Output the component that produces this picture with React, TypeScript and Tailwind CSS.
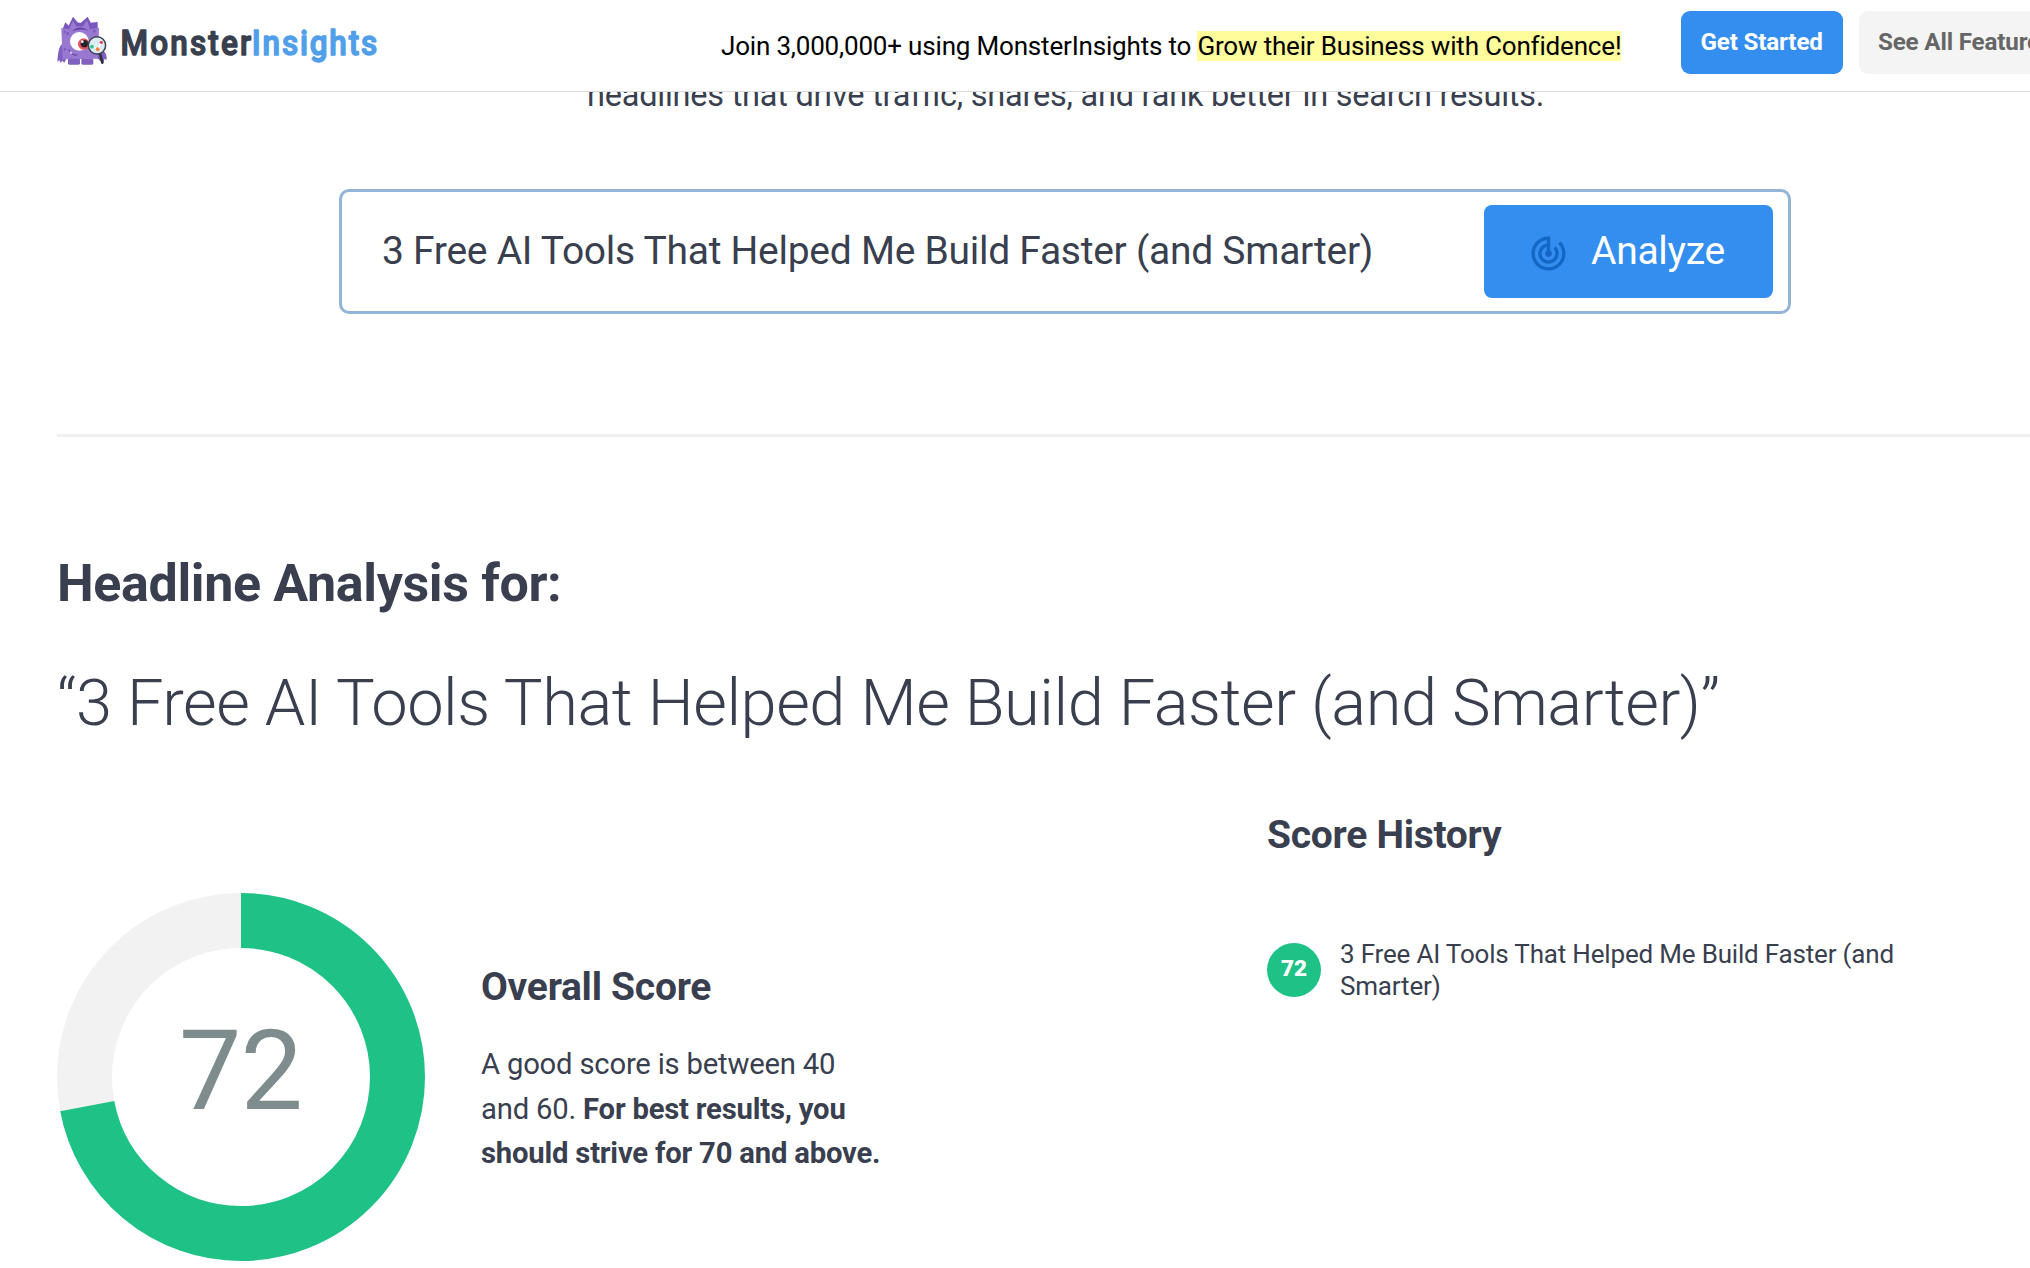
import { MdTrackChanges } from 'react-icons/md';

const headline = '3 Free AI Tools That Helped Me Build Faster (and Smarter)';
const score = 72;

const history = [{ score: 72, title: headline }];

const MonsterLogo = () => (
    <svg width="51" height="49" viewBox="21 18 153 147" className="shrink-0">
        {/* Arms */}
        <path d="M40 98 C26 108 24 128 22 156 L28 150 L31 159 L37 152 L43 158 L48 148 L48 100 Z" fill="#7f5fc0" />
        <path d="M140 110 C160 118 172 128 170 150 L164 146 L160 158 L150 152 L138 140 Z" fill="#7f5fc0" />
        {/* Spikes */}
        <path d="M36 62 L46 37 L56 47 L69 20 L84 38 L93 38 L113 20 L122 38 L143 36 L143 62 Z" fill="#7a55bd" />
        <path d="M56 60 L69 32 L84 56 Z M94 56 L111 30 L120 58 Z" fill="#9a7bd2" />
        {/* Body */}
        <path d="M34 54 L60 58 C72 46 104 46 116 58 L147 53 L144 146 L38 148 Z" fill="#9878d0" />
        <path d="M66 64 Q88 42 116 62 Q90 54 66 64 Z" fill="#6541a5" />
        <circle cx="44" cy="66" r="4" fill="#7f5fc0" />
        <circle cx="53" cy="71" r="5" fill="#7f5fc0" />
        <circle cx="133" cy="63" r="5" fill="#7f5fc0" />
        <circle cx="45" cy="118" r="4" fill="#7f5fc0" />
        {/* Feet */}
        <rect x="54" y="146" width="36" height="18" rx="4" fill="#7f5fc0" />
        <rect x="94" y="146" width="36" height="18" rx="4" fill="#7f5fc0" />
        {/* Eye */}
        <circle cx="88" cy="94" r="28" fill="#fff" />
        <circle cx="101" cy="102" r="17" fill="#e8505b" />
        <circle cx="103" cy="101" r="11" fill="#22222b" />
        <circle cx="97" cy="95" r="4" fill="#fff" />
        {/* Mouth */}
        <path d="M56 118 Q64 138 82 135" stroke="#5d3a9c" strokeWidth="3" fill="none" />
        <path d="M60 124 L62 132 L67 129 Z" fill="#fff" />
        {/* Magnifying glass */}
        <path d="M150 130 L157 158" stroke="#33333f" strokeWidth="8" strokeLinecap="round" />
        <circle cx="141" cy="106" r="26" fill="#dcedf3" stroke="#3f4352" strokeWidth="4.5" />
        <path d="M126 110 L143 117 L154 97" stroke="#fff" strokeWidth="4" fill="none" />
        <circle cx="126" cy="110" r="5.5" fill="#2fc18c" />
        <circle cx="143" cy="118" r="6" fill="#f78343" />
        <circle cx="154" cy="97" r="5" fill="#e8475b" />
    </svg>
);

const Header = () => (
    <header className="relative z-10 flex h-[92px] shrink-0 items-start border-b border-[#dcdcdc] bg-white pl-[57px]">
        <a className="flex w-[664px] shrink-0 pt-4">
            <MonsterLogo />
            {/* Narrowed wordmark with rounded stroke ends */}
            <svg width="270" height="56" className="-mt-1 ml-3 shrink-0 font-['Roboto'] text-[35px] font-medium tracking-normal" strokeWidth="1.4" strokeLinejoin="round">
                <g transform="scale(0.9 1)">
                    <text x="0.5" y="43" textLength="145" fill="#393f4f" stroke="#393f4f">Monster</text>
                    <text x="146.5" y="43" textLength="139" fill="#509fe8" stroke="#509fe8">Insights</text>
                </g>
            </svg>
        </a>
        <p className="w-[960px] shrink-0 pt-[31px] text-[26px] leading-[30px] whitespace-nowrap text-black">
            Join 3,000,000+ using MonsterInsights to{' '}
            <span className="bg-[#fffc9b]">Grow their Business with Confidence!</span>
        </p>
        <div className="flex shrink-0 gap-4 pt-[11px] text-[24.2px] leading-[63px] font-bold whitespace-nowrap">
            <button className="flex h-[63px] w-[162px] rounded-[9px] bg-[#338eef] px-[19.5px] text-white">Get Started</button>
            <button className="flex h-[63px] w-[224px] rounded-[9px] bg-[#f4f4f4] px-[19px] text-[#666]">See All Features</button>
        </div>
    </header>
);

const ScoreChart = () => {
    const length = 2 * Math.PI * 156.5;
    return (
        <svg width="368" height="368" viewBox="0 0 368 368" className="shrink-0">
            <g transform="rotate(-90 184 184)" fill="none" strokeWidth="55">
                <circle cx="184" cy="184" r="156.5" stroke="#f2f2f2" />
                <circle
                    cx="184"
                    cy="184"
                    r="156.5"
                    stroke="#1fc286"
                    strokeDasharray={`${(length * score) / 100} ${length}`}
                />
            </g>
            <text x="183.5" y="216" textAnchor="middle" fill="#7f8c8d" className="text-[111px]">
                {score}
            </text>
        </svg>
    );
};

const App = () => {
    return (
        <div className="flex h-[1268px] w-[2030px] flex-col overflow-hidden bg-white font-['Roboto',sans-serif] text-[#393f4f]">
            <div className="flex flex-col **:tracking-[-0.007em]">
                <Header />
                <main className="-mt-5 flex flex-col pl-[57px]">
                    <p className="-ml-[57px] pl-[587px] text-[32.5px] leading-[46px] whitespace-nowrap">
                        headlines that drive traffic, shares, and rank better in search results.
                    </p>

                    <form className="mt-[71px] ml-[282px] flex h-[125px] w-[1452px] items-start justify-between rounded-[10px] border-3 border-[#92b4d6] pt-[13px] pr-[15px] pl-10">
                        <span className="text-[39px] leading-[92px] whitespace-nowrap">{headline}</span>
                        <button type="button" className="flex h-[93px] w-[289px] items-start rounded-lg bg-[#338eef] pl-12 text-white">
                            <MdTrackChanges className="mt-[28px] -ml-1 size-[41px] shrink-0 text-[#1467c4]" />
                            <span className="ml-[22px] text-[39px] leading-[92px]">Analyze</span>
                        </button>
                    </form>

                    <hr className="mt-[120px] border-t-3 border-[#f0f0f0]" />

                    <h2 className="mt-[117px] text-[52px] leading-[60px] font-bold">Headline Analysis for:</h2>
                    <h1 className="mt-[49px] text-[65px] leading-[80px] font-light whitespace-nowrap">“{headline}”</h1>

                    <div className="mt-[67px] flex">
                        <section className="flex w-[1210px] pt-[83px]">
                            <ScoreChart />
                            <div className="ml-14 w-[420px] pt-[69px]">
                                <h3 className="text-[39px] leading-[50px] font-bold">Overall Score</h3>
                                <p className="mt-[30px] text-[29.25px] leading-[44.5px] whitespace-nowrap">
                                    A good score is between 40
                                    <br />
                                    and 60. <strong>For best results, you</strong>
                                    <br />
                                    <strong>should strive for 70 and above.</strong>
                                </p>
                            </div>
                        </section>
                        <aside className="w-[640px]">
                            <h3 className="text-[39px] leading-[50px] font-bold">Score History</h3>
                            <ul className="mt-[78px]">
                                {history.map((item) => (
                                    <li key={item.title} className="flex items-center">
                                        <span className="size-[54px] shrink-0 rounded-full bg-[#1fc286] text-center text-[22.5px] leading-[51px] font-black text-white">
                                            {item.score}
                                        </span>
                                        <span className="ml-[19px] w-[570px] text-[26px] leading-8">{item.title}</span>
                                    </li>
                                ))}
                            </ul>
                        </aside>
                    </div>
                </main>
            </div>
        </div>
    );
};

export default App;
